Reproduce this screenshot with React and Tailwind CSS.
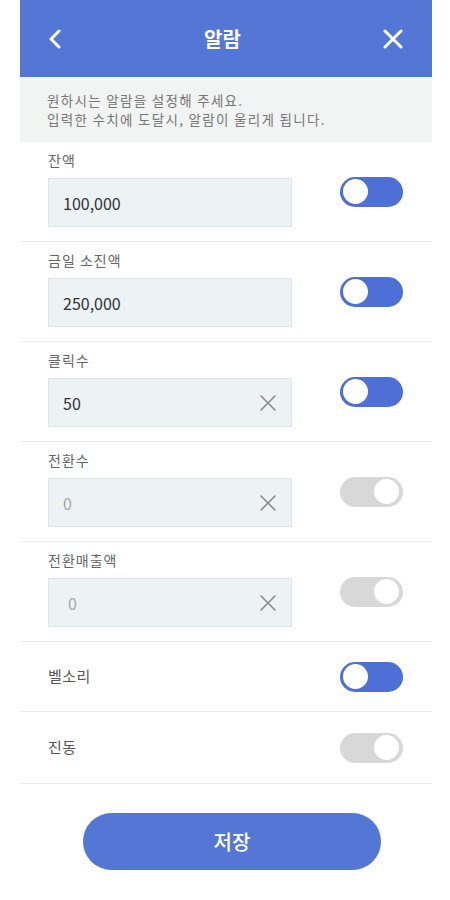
import React from "react";

const font = { fontFamily: '"Noto Sans CJK KR", "Noto Sans", sans-serif' };

function Toggle({ on }) {
  if (on) {
    return (
      <div className="w-[63px] h-[30px] rounded-full bg-[#4d6fd6] flex items-center pl-[3px] shrink-0">
        <div className="w-[25px] h-[25px] rounded-full bg-white" />
      </div>
    );
  }
  return (
    <div className="w-[63px] h-[30px] rounded-full bg-[#d8d8d8] flex items-center justify-end pr-[4px] shrink-0">
      <div className="w-[25px] h-[25px] rounded-full bg-white" />
    </div>
  );
}

function ClearIcon() {
  return (
    <svg width="16" height="16" viewBox="0 0 16 16" className="shrink-0">
      <path d="M1 1 L15 15 M15 1 L1 15" stroke="#8a8a8a" strokeWidth="1.6" strokeLinecap="round" fill="none" />
    </svg>
  );
}

function InputRow({ label, value, on, clear, dim, valuePad = "pl-[14px]" }) {
  return (
    <div className="h-[100px] border-b border-[#ececec] flex items-center justify-between pl-[28px] pr-[29px]">
      <div className="flex flex-col self-start pt-[9px]">
        <div className="text-[14px] leading-[18px] tracking-[1px] text-[#666]">{label}</div>
        <div className={`mt-[9px] w-[244px] h-[49px] bg-[#edf2f4] border border-[#dfe5e8] flex items-center justify-between ${valuePad} pr-[15px]`}>
          <span className={`text-[16px] ${dim ? "text-[#a8a8a8]" : "text-[#333]"}`}>{value}</span>
          {clear && <ClearIcon />}
        </div>
      </div>
      <Toggle on={on} />
    </div>
  );
}

function SimpleRow({ label, on, h }) {
  return (
    <div className={`${h} border-b border-[#ececec] flex items-center justify-between pl-[28px] pr-[29px]`}>
      <span className="text-[15px] tracking-[0.5px] text-[#555]">{label}</span>
      <Toggle on={on} />
    </div>
  );
}

export default function App() {
  return (
    <div className="w-[450px] min-h-[900px] bg-white pl-[20px] pr-[18px]" style={font}>
      <div className="w-[412px] flex flex-col">
        <div className="h-[77px] bg-[#5476d5] flex items-center justify-between pl-[28px] pr-[29px]">
          <svg width="14" height="20" viewBox="0 0 14 20">
            <path d="M11 2 L3 10 L11 18" stroke="white" strokeWidth="3" strokeLinecap="round" strokeLinejoin="round" fill="none" />
          </svg>
          <span className="text-[20px] font-bold text-white">알람</span>
          <svg width="20" height="20" viewBox="0 0 20 20">
            <path d="M2 2 L18 18 M18 2 L2 18" stroke="white" strokeWidth="3" strokeLinecap="round" fill="none" />
          </svg>
        </div>
        <div className="h-[65px] bg-[#f2f3f3] flex flex-col justify-center pl-[27px] text-[13.5px] leading-[19px] tracking-[1.3px] text-[#777]">
          <div>원하시는 알람을 설정해 주세요.</div>
          <div>입력한 수치에 도달시, 알람이 울리게 됩니다.</div>
        </div>
        <InputRow label="잔액" value="100,000" on />
        <InputRow label="금일 소진액" value="250,000" on />
        <InputRow label="클릭수" value="50" on clear />
        <InputRow label="전환수" value="0" clear dim />
        <InputRow label="전환매출액" value="0" clear dim valuePad="pl-[19px]" />
        <SimpleRow label="벨소리" on h="h-[70px]" />
        <SimpleRow label="진동" h="h-[72px]" />
        <div className="pt-[29px] pl-[63px]">
          <button className="w-[298px] h-[57px] rounded-full bg-[#5476d5] text-white text-[20px] font-medium flex items-center justify-center">
            저장
          </button>
        </div>
      </div>
    </div>
  );
}
